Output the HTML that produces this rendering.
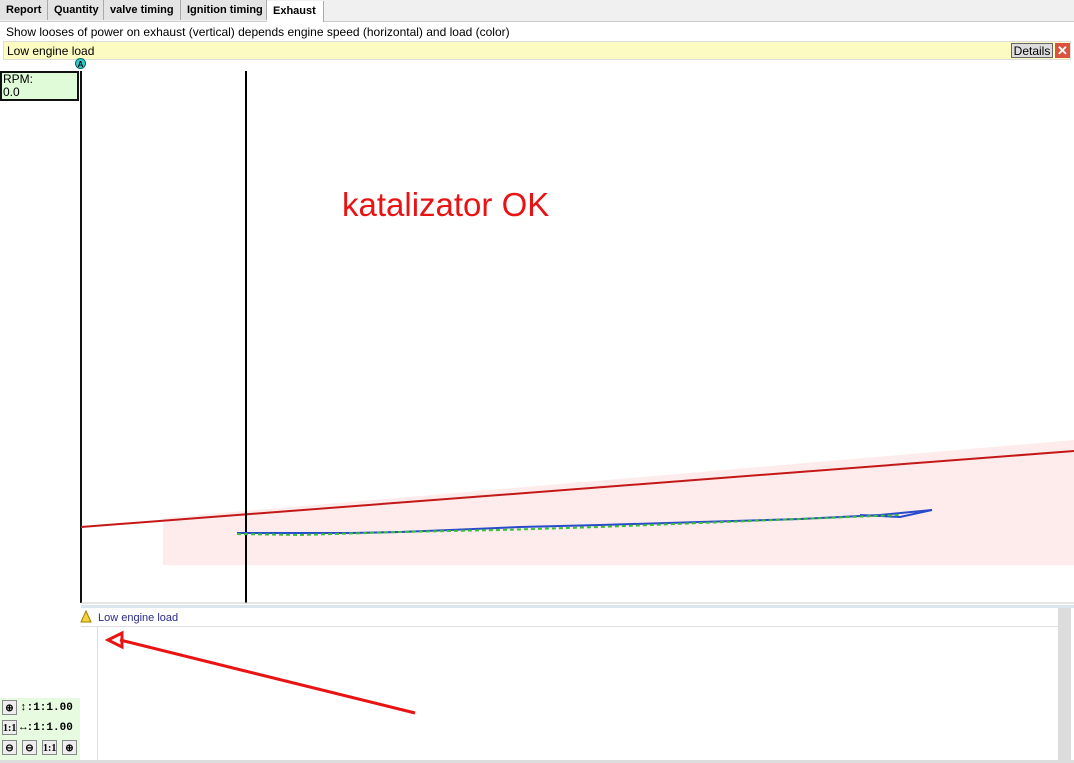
<!DOCTYPE html><html><head><style>
body{margin:0;width:1074px;height:763px;background:#fff;font-family:"Liberation Sans",Arial,sans-serif;position:relative;overflow:hidden}
.a{position:absolute}
.tab{position:absolute;top:0;height:20px;background:#e4e4e4;border-right:1px solid #aaa;font:bold 11px "Liberation Sans",sans-serif;line-height:21px;padding:0 0 0 6px;box-sizing:border-box;white-space:nowrap;overflow:hidden}
.btn{position:absolute;width:15px;height:15px;border:1px solid #888;background:#eee;font:bold 10px "Liberation Serif",serif;text-align:center;line-height:15px;box-sizing:border-box}
.lbl{position:absolute;left:20px;font:bold 11px 'Liberation Mono',monospace;white-space:nowrap}
</style></head><body>
<div class="a" style="left:0;top:0;width:1074px;height:21px;background:#f0f0f0;border-bottom:1px solid #ccc"></div>
<div class="tab" style="left:0;width:48px">Report</div>
<div class="tab" style="left:48px;width:56px">Quantity</div>
<div class="tab" style="left:104px;width:77px">valve timing</div>
<div class="tab" style="left:181px;width:86px">Ignition timing</div>
<div class="tab" style="left:267px;width:57px;background:#fff;top:1px;height:21px">Exhaust</div>
<div class="a" style="left:6px;top:25px;font-size:12px;white-space:nowrap">Show looses of power on exhaust (vertical) depends engine speed (horizontal) and load (color)</div>
<div class="a" style="left:3px;top:41px;width:1068px;height:19px;background:#fbfbc2;border:1px solid #ddd;box-sizing:border-box"></div>
<div class="a" style="left:7px;top:44px;font-size:12px">Low engine load</div>
<div class="a" style="left:1011px;top:43px;width:42px;height:15px;border:1px solid #666;background:#ddd;font-size:12px;line-height:15px;text-align:center;box-sizing:border-box">Details</div>
<div class="a" style="left:1055px;top:43px;width:15px;height:15px;background:#d9533f;color:#fff;font:bold 13px sans-serif;line-height:15px;text-align:center">✕</div>
<div class="a" style="left:75px;top:58px;width:11px;height:11px;border-radius:50%;background:#3cc;border:1px solid #066;font:bold 8px sans-serif;text-align:center;line-height:11px;box-sizing:border-box">A</div>
<div class="a" style="left:0;top:71px;width:79px;height:30px;background:#e0fbd8;border:2px solid #111;box-sizing:border-box;font-size:12px;line-height:13px;padding-left:1px">RPM:<br>0.0</div>
<div class="a" style="left:80px;top:71px;width:2px;height:532px;background:#111"></div>
<svg class="a" style="left:0;top:0" width="1074" height="763">
<polygon points="163,518 1074,440 1074,565 163,565" fill="#fdeceb"/>
<line x1="81" y1="527" x2="1074" y2="451" stroke="#c41818" stroke-width="2"/>
<line x1="246" y1="71" x2="246" y2="603" stroke="#000" stroke-width="2"/>
<polyline points="237,533 290,533 350,533 400,532 450,530 520,527 600,525 700,522 800,519 880,515 932,510 900,517 860,515" fill="none" stroke="#2a4acc" stroke-width="2"/>
<polyline points="237,534 300,535 400,532 500,530 600,527 700,523 800,519 900,515" fill="none" stroke="#3bbf3b" stroke-width="2" stroke-dasharray="4,3"/>
<line x1="81" y1="603" x2="1074" y2="603" stroke="#ccc"/>
<polygon points="108,640 122,633 122,647" fill="none" stroke="#e81414" stroke-width="3"/>
<line x1="120" y1="640" x2="415" y2="713" stroke="#e81414" stroke-width="3"/>
<polygon points="86,611 91,622 81,622" fill="#f6d33a" stroke="#a08000"/>
</svg>
<div class="a" style="left:81px;top:605px;width:993px;height:3px;background:#dbe5ee"></div>
<div class="a" style="left:98px;top:612px;font-size:11px;color:#2a2a8a">Low engine load</div>
<div class="a" style="left:81px;top:626px;width:977px;height:1px;background:#ddd"></div>
<div class="a" style="left:97px;top:626px;width:1px;height:134px;background:#ddd"></div>
<div class="a" style="left:1058px;top:608px;width:13px;height:152px;background:#dcdcdc"></div>
<div class="a" style="left:0;top:760px;width:1074px;height:3px;background:#ddd"></div>
<div class="a" style="left:0;top:698px;width:80px;height:62px;background:#e6fbe0"></div>
<div class="btn" style="left:2px;top:700px">⊕</div><div class="lbl" style="top:702px">↕:1:1.00</div>
<div class="btn" style="left:2px;top:720px">1:1</div><div class="lbl" style="top:722px">↔:1:1.00</div>
<div class="btn" style="left:2px;top:740px">⊖</div><div class="btn" style="left:22px;top:740px">⊖</div><div class="btn" style="left:42px;top:740px">1:1</div><div class="btn" style="left:62px;top:740px">⊕</div>
<div class="a" style="left:342px;top:186px;font-size:33px;color:#e81414;white-space:nowrap">katalizator OK</div>
</body></html>
